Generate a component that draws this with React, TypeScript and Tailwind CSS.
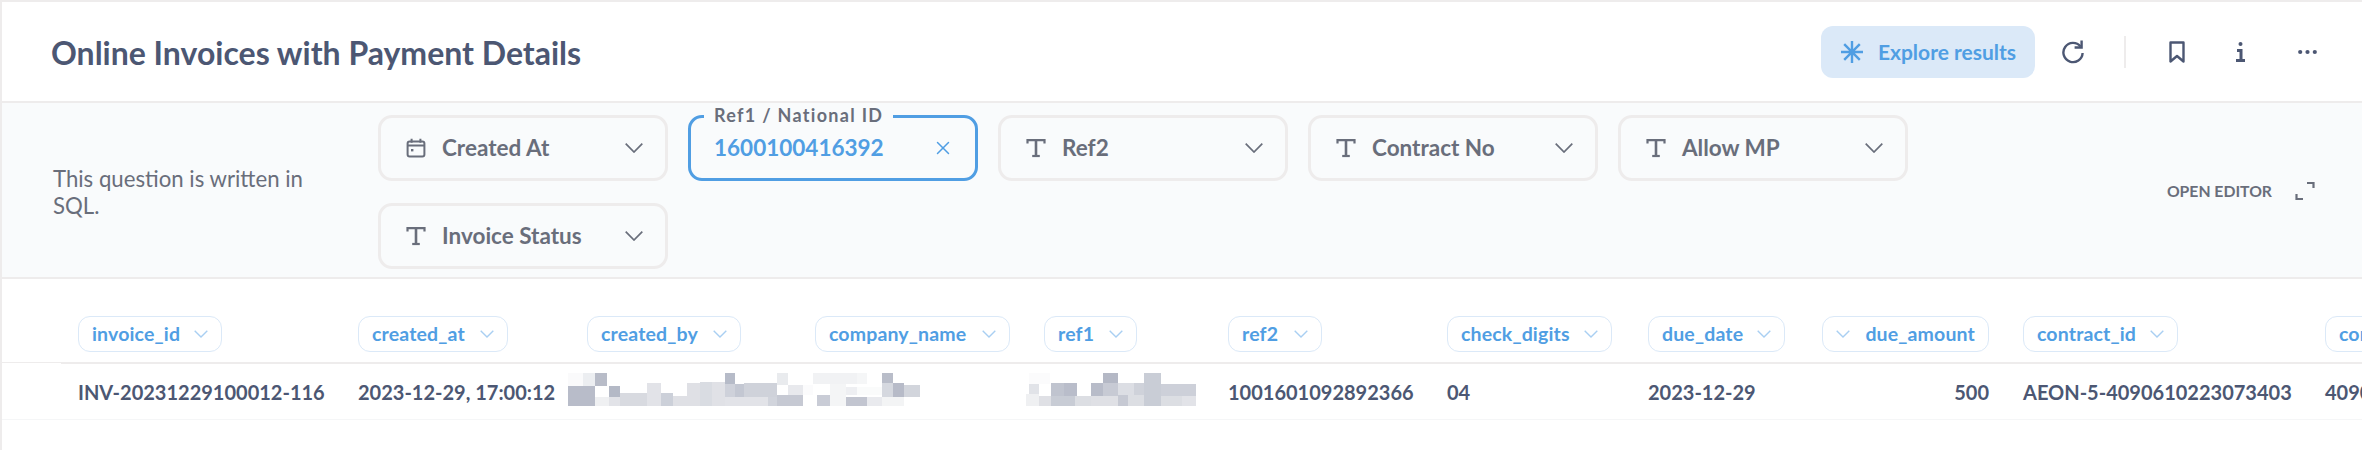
import { X } from 'lucide-react';

const LATO = { fontFamily: 'Lato, sans-serif' };

type Block = [number, number, number, number, string];

// redacted cells, coordinates in thirds of a pixel
const MASK_A: Block[] = [
  [24, 68, 8, 48, '#fafafb'], [68, 105, 8, 48, '#eceef1'], [105, 141, 8, 48, '#b8bcc8'],
  [24, 105, 48, 108, '#b8bcc9'], [105, 147, 80, 108, '#eff0f2'], [147, 180, 48, 80, '#b4b9c6'],
  [147, 180, 80, 108, '#e2e3e8'], [180, 261, 68, 108, '#d8dae0'], [261, 302, 38, 108, '#e2e3e8'],
  [302, 338, 68, 108, '#ccd0d9'], [338, 381, 78, 108, '#dfe0e5'], [381, 420, 38, 108, '#dfe0e5'],
  [420, 456, 36, 108, '#d9dce2'], [456, 494, 36, 108, '#e0e1e6'], [494, 525, 8, 42, '#b6bbc8'],
  [494, 525, 42, 80, '#ced1da'], [525, 552, 42, 80, '#c3c7d2'], [552, 650, 38, 80, '#cfd2da'],
  [494, 624, 80, 108, '#e2e3e8'], [624, 650, 80, 108, '#d1d4dc'], [650, 730, 75, 108, '#c6c9d3'],
  [650, 685, 8, 45, '#e9ebee'], [685, 730, 45, 75, '#e8e9ed'], [730, 760, 45, 75, '#fbfbfc'],
  [760, 890, 8, 42, '#f1f2f4'], [890, 920, 8, 42, '#f5f6f7'], [810, 858, 42, 108, '#f4f5f6'],
  [858, 890, 50, 75, '#eeeff2'], [890, 966, 50, 75, '#fafbfb'], [771, 810, 75, 108, '#c9ccd6'],
  [858, 920, 80, 108, '#c2c5d0'], [920, 966, 80, 108, '#e9eaee'], [966, 1032, 80, 108, '#f3f4f5'],
  [966, 998, 8, 40, '#b9bdc9'], [966, 998, 40, 80, '#d5d8df'], [998, 1032, 40, 80, '#b7bbc8'],
  [1032, 1080, 45, 80, '#d2d5dc'],
];

const MASK_B: Block[] = [
  [42, 105, 8, 42, '#fbfbfc'], [42, 72, 42, 72, '#e1e3e8'], [32, 72, 72, 108, '#eff0f2'],
  [72, 108, 78, 108, '#dfe0e5'], [108, 148, 40, 78, '#c0c4cf'], [148, 186, 40, 78, '#b9bdca'],
  [108, 180, 78, 108, '#c8ccd5'], [180, 228, 78, 108, '#dcdee3'], [228, 265, 40, 78, '#b8bcc9'],
  [265, 309, 8, 40, '#b4b8c5'], [265, 309, 40, 78, '#c7cad4'], [228, 309, 78, 108, '#dfe0e5'],
  [309, 357, 40, 75, '#dcdee4'], [309, 339, 75, 108, '#c6c9d3'], [339, 387, 75, 108, '#dcdee3'],
  [357, 387, 40, 75, '#cfd2da'], [387, 438, 8, 108, '#c9cdd6'], [438, 543, 42, 78, '#cdd0d9'],
  [438, 500, 78, 108, '#dcdee3'], [500, 543, 78, 108, '#e2e3e8'],
];

function Mask({ blocks, w, className }: { blocks: Block[]; w: number; className: string }) {
  return (
    <svg width={w / 3} height={36} viewBox={`0 0 ${w} 108`} shapeRendering="crispEdges" className={className}>
      {blocks.map(([x1, x2, y1, y2, c], i) => (
        <rect key={i} x={x1} y={y1} width={x2 - x1} height={y2 - y1} fill={c} />
      ))}
    </svg>
  );
}

function Chevron({ w, h, color, stroke }: { w: number; h: number; color: string; stroke: number }) {
  return (
    <svg width={w} height={h} viewBox={`0 0 ${w} ${h}`} fill="none" stroke={color} strokeWidth={stroke} className="shrink-0">
      <path d={`M0.7 0.7L${w / 2} ${h - 1}L${w - 0.7} 0.7`} />
    </svg>
  );
}

function TypeIcon() {
  return (
    <svg width="20" height="20" viewBox="0 0 20 20" fill="none" stroke="#696e7b" strokeWidth="2.2" className="shrink-0">
      <path d="M1.5 5.5V2.1h17v3.4" />
      <path d="M10 2.1v15.4" strokeWidth="2.6" />
      <path d="M6.2 18h7.6" />
    </svg>
  );
}

function CalendarIcon() {
  return (
    <svg width="20" height="20" viewBox="0 0 20 20" fill="none" stroke="#696e7b" strokeWidth="2" className="shrink-0">
      <rect x="1.6" y="3.6" width="16.8" height="15" rx="2" />
      <path d="M2 7.6h16M5.6 0.8v4M14.4 0.8v4" />
      <rect x="5" y="11" width="2.4" height="2.4" fill="#696e7b" stroke="none" />
    </svg>
  );
}

function Filter({ label, icon }: { label: string; icon: 'type' | 'date' }) {
  return (
    <div className="flex h-[66px] w-[290px] items-center rounded-[14px] border-[3px] border-[#eeecec] pl-[25px] pr-[22px]">
      {icon === 'date' ? <CalendarIcon /> : <TypeIcon />}
      <span className="ml-[16px] flex-1 text-[22.5px] font-bold text-[#696e7b]">{label}</span>
      <Chevron w={18} h={10} color="#696e7b" stroke={1.7} />
    </div>
  );
}

function ActiveFilter() {
  return (
    <div className="relative flex h-[66px] w-[290px] items-center rounded-[14px] border-[3px] border-[#509ee3] pl-[23px] pr-[21px]">
      <span className="absolute left-[13px] top-[-15px] bg-[#f9fbfc] px-[10px] text-[18px] leading-[24px] font-bold tracking-[1.3px] text-[#696e7b]">
        Ref1 / National ID
      </span>
      <span className="flex-1 text-[22.5px] font-bold text-[#509ee3]">1600100416392</span>
      <X size={22} strokeWidth={1.6} color="#509ee3" />
    </div>
  );
}

const COLUMNS = [
  { name: 'invoice_id', chip: 'w-[144px]', value: 'INV-20231229100012-116' },
  { name: 'created_at', chip: 'w-[150px]', value: '2023-12-29, 17:00:12' },
  { name: 'created_by', chip: 'w-[154px]', mask: 'a' },
  { name: 'company_name', chip: 'w-[195px]' },
  { name: 'ref1', chip: 'w-[93px]', mask: 'b' },
  { name: 'ref2', chip: 'w-[94px]', value: '1001601092892366' },
  { name: 'check_digits', chip: 'w-[165px]', value: '04' },
  { name: 'due_date', chip: 'w-[137px]', value: '2023-12-29' },
  { name: 'due_amount', chip: 'w-[167px]', value: '500', right: true },
  { name: 'contract_id', chip: 'w-[155px]', value: 'AEON-5-4090610223073403' },
  { name: 'contract_no', chip: 'w-[170px]', value: '4090610223073403' },
];

function ColumnHead({ name, chip, right }: { name: string; chip: string; right?: boolean }) {
  const chevron = <Chevron w={14} h={8} color="#a9cff2" stroke={1.4} />;
  return (
    <div className={`flex h-[36px] items-center justify-between rounded-[12px] border-[1.5px] border-[#dbe9f8] px-[13px] text-[19.5px] font-bold tracking-[0.15px] whitespace-nowrap text-[#509ee3] ${chip}`}>
      {right && chevron}
      <span>{name}</span>
      {!right && chevron}
    </div>
  );
}

export default function App() {
  return (
    <div style={LATO} className="h-[450px] w-[2362px] overflow-hidden border-l-2 border-t-2 border-[#eeecec] bg-white">
      <header className="flex h-[101px] items-center border-b-2 border-[#eeecec] pl-[49px] pr-[45px]">
        <h1 className="flex-1 pt-[2px] text-[32px] font-bold text-[#4c5773]">Online Invoices with Payment Details</h1>
        <button className="flex h-[52px] w-[214px] items-center justify-center gap-[15px] rounded-[12px] bg-[#dbe9f8] pl-[1px] text-[21px] font-bold text-[#509ee3]">
          <svg width="22" height="22" viewBox="0 0 22 22" fill="none" stroke="#509ee3" strokeWidth="2.4">
            <path d="M11 0v22M0 11h22M3.2 3.2l15.6 15.6M18.8 3.2L3.2 18.8" />
          </svg>
          Explore results
        </button>
        <svg width="22" height="24" viewBox="0 0 22 24" fill="none" stroke="#4c5773" strokeWidth="2.4" className="ml-[27px]">
          <path d="M18.5 6.5A9.6 9.6 0 1 0 20.6 13" />
          <path d="M19.6 0.5v7h-7" />
        </svg>
        <div className="ml-[40px] h-[32px] w-[2px] bg-[#eeecec]" />
        <svg width="16" height="22" viewBox="0 0 16 22" fill="none" stroke="#4c5773" strokeWidth="2.4" className="ml-[43px]">
          <path d="M1.5 1.5h13v19l-6.5-5.5-6.5 5.5z" strokeLinejoin="round" />
        </svg>
        <svg width="9" height="20" viewBox="0 0 9 20" fill="#4c5773" className="ml-[51px]">
          <circle cx="4.5" cy="2" r="2" />
          <path d="M1 7h5.5v10H9v3H0v-3h3.5v-7H1z" />
        </svg>
        <svg width="19" height="6" viewBox="0 0 19 6" fill="#4c5773" className="ml-[53px]">
          <circle cx="2.2" cy="3" r="2.1" />
          <circle cx="9.5" cy="3" r="2.1" />
          <circle cx="16.8" cy="3" r="2.1" />
        </svg>
      </header>

      <section className="flex h-[176px] items-center border-b-2 border-[#eeecec] bg-[#f9fbfc] pb-[1px] pr-[47px]">
        <p className="ml-[51px] mt-[5px] w-[325px] pr-[60px] text-[22.2px] leading-[27px] text-[#696e7b]">
          This question is written in SQL.
        </p>
        <div className="flex w-[1550px] flex-wrap gap-x-[20px] gap-y-[22px] self-start pt-[12px]">
          <Filter label="Created At" icon="date" />
          <ActiveFilter />
          <Filter label="Ref2" icon="type" />
          <Filter label="Contract No" icon="type" />
          <Filter label="Allow MP" icon="type" />
          <Filter label="Invoice Status" icon="type" />
        </div>
        <div className="ml-auto mt-[3px] flex shrink-0 items-center gap-[23px]">
          <span className="text-[15.75px] font-bold whitespace-nowrap text-[#696e7b]">OPEN EDITOR</span>
          <svg width="20" height="20" viewBox="0 0 20 20" fill="none" stroke="#696e7b" strokeWidth="2.2">
            <path d="M12 2h6.5v5M8 18H1.5v-5" />
          </svg>
        </div>
      </section>

      <div className="grid grid-cols-[59px_280px_229px_228px_229px_184px_219px_201px_174px_201px_302px_400px]">
        <div className="h-[84px] border-b border-[#eeecec]" />
        {COLUMNS.map((c) => (
          <div
            key={c.name}
            className={`flex h-[85px] items-start border-b-2 border-[#eeecec] px-[17px] pt-[37px] ${c.right ? 'justify-end' : 'justify-start'}`}
          >
            <ColumnHead name={c.name} chip={c.chip} right={c.right} />
          </div>
        ))}
        <div className="h-[56px] border-b border-[#f5f6f7]" />
        {COLUMNS.map((c) => (
          <div
            key={c.name}
            className={`relative flex h-[56px] items-center border-b border-[#f5f6f7] px-[17px] pt-[1px] text-[20px] font-bold whitespace-nowrap text-[#4c5773] ${c.right ? 'justify-end' : 'justify-start'}`}
          >
            {c.value}
            {c.mask === 'a' && <Mask blocks={MASK_A} w={1080} className="absolute left-[-10px] top-[6px]" />}
            {c.mask === 'b' && <Mask blocks={MASK_B} w={543} className="absolute left-[-12px] top-[6px]" />}
          </div>
        ))}
      </div>
    </div>
  );
}
